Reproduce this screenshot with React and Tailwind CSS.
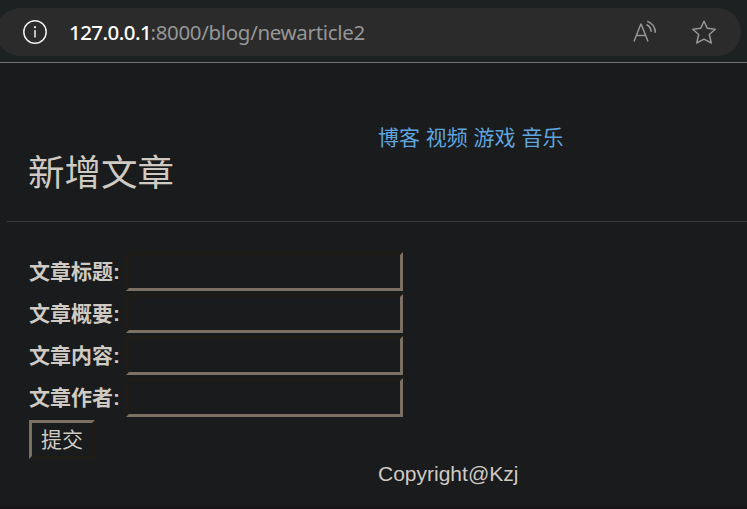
const fields = ['文章标题:', '文章概要:', '文章内容:', '文章作者:'];
const links = ['博客', '视频', '游戏', '音乐'];

function InfoIcon() {
  return (
    <svg className="h-6 w-6 shrink-0" viewBox="0 0 24 24" fill="none" stroke="#f0f0f0" strokeWidth="1.5">
      <circle cx="12" cy="12" r="11.2" />
      <path d="M12 10v7.5" />
      <circle cx="12" cy="7.2" r="1.1" fill="#f0f0f0" stroke="none" />
    </svg>
  );
}

function ReadAloudIcon() {
  return (
    <svg className="h-6 w-6 shrink-0" viewBox="0 0 24 24" fill="none" stroke="#969696" strokeWidth="1.5">
      <path d="M1 21.500 7.800 4.200h.4L15 21.500M3.800 15.500h8.400" />
      <path d="M13.500 4.500a9 9 0 0 1 4.800 7.300M14.300 1.300a12 12 0 0 1 8 11.500" strokeWidth="1.700" />
    </svg>
  );
}

function StarIcon() {
  return (
    <svg className="h-6 w-6 shrink-0" viewBox="0 0 24 24" fill="none" stroke="#969696" strokeWidth="1.5" strokeLinejoin="round">
      <path d="M12 1.200 15.300 8.300l8 .9-6 5.300 2 8.500L12 19.200 4.700 23l2-8.500-6-5.300 8-.9z" />
    </svg>
  );
}

function AddressBar() {
  return (
    <header className="h-[63px] border-b border-[#727474] bg-[#1c2221] pt-2">
      <div className="-ml-1 mr-1.5 flex h-12 items-center rounded-full bg-[#2b2b2b] pl-[27px] pr-[25px]">
        <InfoIcon />
        <div className="ml-[22px] mr-px flex flex-1 whitespace-nowrap font-['Noto_Sans','Open_Sans',sans-serif] text-[20.5px] leading-6">
          <span className="w-[81.5px] font-medium tracking-[-0.55px] text-white">127.0.0.1</span>
          <span className="tracking-[-0.33px] text-[#969696]">:8000/blog/newarticle2</span>
        </div>
        <ReadAloudIcon />
        <span className="w-[35px]" />
        <StarIcon />
      </div>
    </header>
  );
}

export default function App() {
  return (
    <div className="h-[509px] w-[747px] overflow-hidden border-b-3 border-[#191519] bg-[#1a1b1d] font-['Liberation_Sans','Noto_Sans_CJK_SC',sans-serif] text-[21px] leading-[30px] text-[#cfcac2]">
      <AddressBar />
      <main className="ml-[7px] pt-[60px]">
        <nav className="ml-[371px] flex gap-[5.8px] text-[#5fa5df]">
          {links.map((link) => (
            <a key={link} href="#">{link}</a>
          ))}
        </nav>
        <h1 className="ml-[21px] pt-px text-[36.5px] font-normal leading-10">新增文章</h1>
        <hr className="mt-[27px] border-[#38393b]" />
        <form className="ml-[22px] mt-[30px]">
          {fields.map((label) => (
            <label key={label} className="mb-[3px] flex h-[39px] items-center font-bold">
              <span className="w-[97px]">{label}</span>
              <input className="h-[39px] w-[277px] border-3 border-b-[#7b7063] border-l-[#1f1c18] border-r-[#7b7063] border-t-[#1f1c18] bg-transparent outline-none" />
            </label>
          ))}
          <button type="button" className="block h-[39px] w-[66px] border-3 border-b-[#1f1c18] border-l-[#7b7063] border-r-[#1f1c18] border-t-[#7b7063] font-normal leading-[33px]">
            提交
          </button>
        </form>
        <footer className="ml-[371px]">Copyright@Kzj</footer>
      </main>
    </div>
  );
}
